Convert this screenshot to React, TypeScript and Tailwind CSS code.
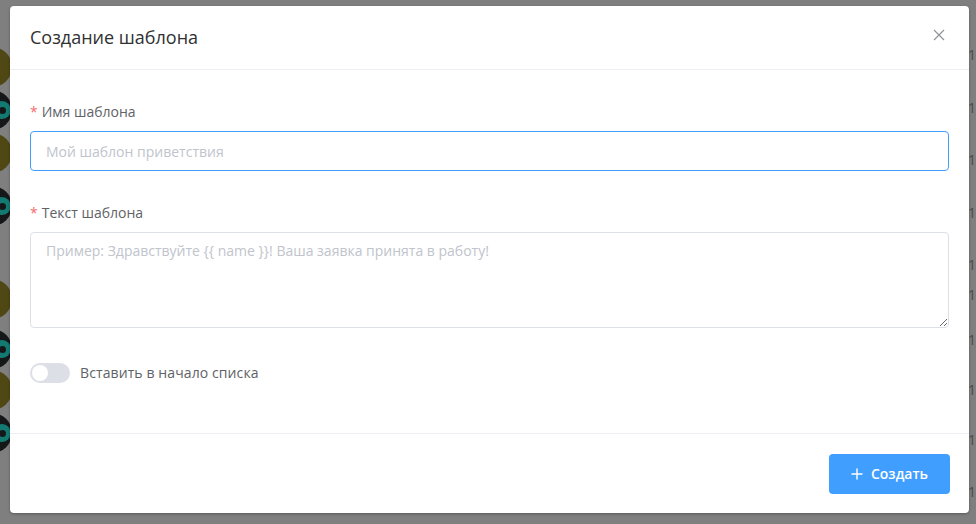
import { useState } from "react";

const avatars = [
  { top: 47, kind: "olive" },
  { top: 90, kind: "dark" },
  { top: 133, kind: "olive" },
  { top: 186, kind: "dark" },
  { top: 279, kind: "olive" },
  { top: 329, kind: "dark" },
  { top: 370, kind: "olive" },
  { top: 413, kind: "dark" },
];

const digitRows = [55, 108, 160, 213, 265, 295, 340, 390, 440, 492];

export default function App() {
  const [name, setName] = useState("");
  const [text, setText] = useState("");
  const [toTop, setToTop] = useState(false);

  return (
    <div
      className="relative w-[976px] h-[524px] overflow-hidden bg-[#7f7f7f]"
      style={{ fontFamily: '"Open Sans", "Noto Sans", Arial, sans-serif' }}
    >
      {/* страница под затемнением */}
      <div className="absolute inset-0">
        {avatars.map((a, i) =>
          a.kind === "olive" ? (
            <div
              key={i}
              className="absolute left-[-28px] w-[40px] h-[40px] rounded-full bg-[#4f4814]"
              style={{ top: a.top }}
            />
          ) : (
            <div
              key={i}
              className="absolute left-[-28px] w-[40px] h-[40px] rounded-full bg-[#151819] flex items-center justify-end pr-[1px]"
              style={{ top: a.top }}
            >
              <div className="w-[18px] h-[18px] rounded-full bg-[#137a72] flex items-center justify-center">
                <div className="w-[7px] h-[7px] rounded-full bg-[#151819]" />
              </div>
            </div>
          )
        )}
        {digitRows.map((t) => (
          <span
            key={t}
            className="absolute left-[968px] text-[14px] leading-none text-[#4a4a4a]"
            style={{ top: t - 7 }}
          >
            1
          </span>
        ))}
      </div>

      {/* модальное окно */}
      <div className="relative ml-[10px] mt-[6px] w-[959px] h-[507px] bg-white rounded-[4px] shadow-[0_1px_3px_rgba(0,0,0,0.3)] flex flex-col">
        <div className="h-[64px] flex items-center justify-between pl-[20px] pr-[20px] border-b border-[#ebeef5]">
          <span className="text-[18px] text-[#303133]">Создание шаблона</span>
          <button className="w-[16px] h-[16px] flex items-center justify-center text-[#909399] mr-[2px] mt-[-6px]">
            <svg width="12" height="12" viewBox="0 0 12 12" fill="none" stroke="currentColor" strokeWidth="1.2">
              <path d="M1 1L11 11M11 1L1 11" />
            </svg>
          </button>
        </div>

        <div className="flex-1 px-[20px] pt-[32px]">
          <div className="text-[14px] leading-[20px] text-[#606266]">
            <span className="text-[#f56c6c] mr-[4px]">*</span>Имя шаблона
          </div>
          <input
            value={name}
            onChange={(e) => setName(e.target.value)}
            placeholder="Мой шаблон приветствия"
            className="mt-[9px] w-full h-[40px] px-[15px] text-[14px] text-[#606266] border border-[#409eff] rounded-[4px] outline-none placeholder:text-[#c0c4cc]"
          />

          <div className="mt-[32px] text-[14px] leading-[20px] text-[#606266]">
            <span className="text-[#f56c6c] mr-[4px]">*</span>Текст шаблона
          </div>
          <textarea
            value={text}
            onChange={(e) => setText(e.target.value)}
            placeholder="Пример: Здравствуйте {{ name }}! Ваша заявка принята в работу!"
            className="block mt-[9px] w-full h-[96px] px-[15px] py-[6px] text-[14px] leading-[24px] text-[#606266] border border-[#dcdfe6] rounded-[4px] outline-none placeholder:text-[#c0c4cc]"
          />

          <div className="mt-[34px] flex items-center gap-[10px]">
            <button
              onClick={() => setToTop(!toTop)}
              className={`relative w-[40px] h-[20px] rounded-full ${toTop ? "bg-[#409eff]" : "bg-[#dcdfe6]"}`}
            >
              <span
                className={`absolute top-[2px] w-[16px] h-[16px] rounded-full bg-white ${toTop ? "left-[22px]" : "left-[2px]"}`}
              />
            </button>
            <span className="text-[14px] text-[#606266] tracking-[0.1px]">Вставить в начало списка</span>
          </div>
        </div>

        <div className="h-[80px] border-t border-[#ebeef5] flex items-center justify-end px-[19px]">
          <button className="w-[121px] h-[40px] rounded-[4px] bg-[#409eff] text-white text-[14px] font-semibold flex items-center justify-center gap-[8px]">
            <svg width="12" height="12" viewBox="0 0 12 12" fill="none" stroke="currentColor" strokeWidth="1.4">
              <path d="M6 0.5V11.5M0.5 6H11.5" />
            </svg>
            Создать
          </button>
        </div>
      </div>
    </div>
  );
}
